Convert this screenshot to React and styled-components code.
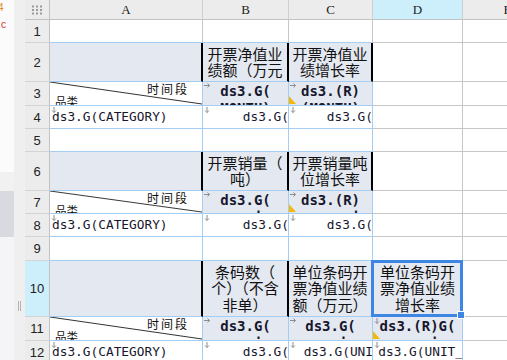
import React from 'react';
import styled, { createGlobalStyle } from 'styled-components';

const BLUE = '#a3cdf3';
const GRAY = '#c6c6c6';
const TITLE_BG = '#e4e8f0';
const HEAD_BG = '#ececec';
const ACTIVE_BG = '#cdeefb';
const SELECT = '#3d86e4';

const GlobalStyle = createGlobalStyle`
  html, body { margin: 0; padding: 0; background: #fff; }
  body { font-family: "Noto Sans CJK SC", "Liberation Sans", sans-serif; }
`;

const Page = styled.div`
  display: flex;
  width: 507px;
  height: 360px;
  overflow: hidden;
`;

const Side = styled.div`
  flex: none;
  width: 25px;
  display: flex;
`;

const Strip = styled.div`
  width: 14px;
  display: flex;
  flex-direction: column;
`;

const StripPart = styled.div`
  flex: ${({ $h }) => ($h ? 'none' : 1)};
  height: ${({ $h }) => ($h ? `${$h}px` : 'auto')};
  background: ${({ $bg }) => $bg};
  overflow: hidden;
`;

const Peek = styled.div`
  margin: ${({ $top }) => $top}px 0 0 ${({ $left }) => $left}px;
  font: 10px/10px "Liberation Sans", sans-serif;
  color: ${({ $color }) => $color};
`;

const Gutter = styled.div`
  width: 11px;
  background: #efefef;
  display: flex;
  flex-direction: column;
  align-items: center;
  padding-top: 301px;
  box-sizing: border-box;
`;

const Splitter = styled.div`
  width: 1px;
  height: 10px;
  border-left: 1px solid #b4b4b4;
  border-right: 1px solid #b4b4b4;
`;

const Sheet = styled.div`
  flex: none;
  display: grid;
  grid-template-columns: 25px 153px 86px 84px 90px 90px;
  grid-template-rows: 20px 23px 39px 24px 23px 23px 39px 23px 23px 24px 56px 24px 23px;
`;

const Corner = styled.div`
  background: ${HEAD_BG};
  border-right: 1px solid #c2c2c2;
  border-bottom: 1px solid #c2c2c2;
  display: flex;
  align-items: center;
  justify-content: center;
`;

const ColHead = styled.div`
  background: ${({ $active }) => ($active ? ACTIVE_BG : HEAD_BG)};
  border-right: 1px solid #d0d0d0;
  border-bottom: 1px solid #c2c2c2;
  display: flex;
  align-items: center;
  justify-content: center;
  font: 13px "Liberation Serif", serif;
  color: #222;
`;

const RowHead = styled.div`
  background: ${({ $active }) => ($active ? ACTIVE_BG : HEAD_BG)};
  border-right: 1px solid #c2c2c2;
  border-bottom: 1px solid #d4d4d4;
  display: flex;
  align-items: center;
  justify-content: center;
  font: 13px "Liberation Sans", sans-serif;
  color: #222;
`;

const Cell = styled.div`
  position: relative;
  z-index: ${({ $raised }) => ($raised ? 2 : 'auto')};
  min-width: 0;
  overflow: ${({ $raised }) => ($raised ? 'visible' : 'hidden')};
  background: ${({ $bg }) => $bg || '#fff'};
  border-right: ${({ $rw }) => $rw || 1}px solid ${({ $rc }) => $rc || GRAY};
  border-bottom: 1px solid ${({ $line }) => $line || GRAY};
  display: flex;
  flex-direction: column;
  justify-content: center;
  align-items: ${({ $h }) => $h || 'center'};
`;

const HeadCell = styled(Cell)`
  justify-content: flex-start;
  padding-top: 1px;
`;

const DiagCell = styled(Cell)`
  justify-content: space-between;
  align-items: stretch;
  padding: 1px 13px 2px 5px;
`;

const Slash = styled.svg`
  position: absolute;
  inset: 0;
  width: 100%;
  height: 100%;
`;

const DiagLabel = styled.span`
  align-self: ${({ $end }) => ($end ? 'flex-end' : 'flex-start')};
  font-size: ${({ $size }) => $size}px;
  line-height: 12px;
  letter-spacing: ${({ $spread }) => $spread || 0}px;
  color: #111;
`;

const Title = styled.div`
  font-size: 15px;
  line-height: 16.5px;
  color: #111;
  text-align: center;
  white-space: nowrap;
`;

const Formula = styled.div`
  font-family: "DejaVu Sans Mono", "Liberation Mono", monospace;
  font-size: ${({ $bold }) => ($bold ? '14px' : '12.8px')};
  font-weight: ${({ $bold }) => ($bold ? 700 : 400)};
  line-height: ${({ $bold }) => ($bold ? '17px' : '16px')};
  color: #17172e;
  white-space: pre;
  text-align: center;
  margin: ${({ $inset }) => $inset || '0'};
`;

const Marker = styled.svg`
  position: absolute;
  left: 1px;
  top: 1px;
  width: 6px;
  height: 6px;
`;

const Flag = styled.span`
  position: absolute;
  left: 0;
  bottom: 1px;
  width: 7px;
  height: 8px;
  background: #f3b80a;
  clip-path: polygon(0 0, 0 100%, 100% 100%);
`;

const Selection = styled.div`
  position: absolute;
  inset: -1px -1px -1px -2px;
  border: 3px solid ${SELECT};
  pointer-events: none;
`;

const Handle = styled.span`
  position: absolute;
  right: -5px;
  bottom: -5px;
  width: 6px;
  height: 6px;
  background: ${SELECT};
  border: 1px solid #fff;
`;

const GridDots = () => (
  <svg width="12" height="10" viewBox="0 0 12 10">
    {[0, 1, 2].map((r) =>
      [0, 1, 2].map((c) => (
        <rect key={`${r}${c}`} x={c * 4 + 1} y={r * 3.5 + 0.5} width="2" height="2" fill="#9a9a9a" />
      ))
    )}
  </svg>
);

const Arrow = ({ down }) => (
  <Marker viewBox="0 0 6 6">
    {down ? (
      <path d="M3 0V5.5M1 3.5L3 5.5L5 3.5" stroke="#8c8c8c" strokeWidth="1" fill="none" />
    ) : (
      <path d="M0 2.5H5.5M3.5 0.5L5.5 2.5L3.5 4.5" stroke="#8c8c8c" strokeWidth="1" fill="none" />
    )}
  </Marker>
);

const blocks = [
  {
    start: 2,
    titles: [['开票净值业', '绩额（万元'], ['开票净值业', '绩增长率']],
    heads: [['ds3.G(', 'MONTH)'], ['ds3.(R)', '(MONTH)']],
    flags: [false, true],
    data: ['ds3.G(', 'ds3.G('],
  },
  {
    start: 6,
    titles: [['开票销量（', '吨）'], ['开票销量吨', '位增长率']],
    heads: [['ds3.G(', '    i '], ['ds3.(R)', '      i']],
    flags: [false, true],
    data: ['ds3.G(', 'ds3.G('],
  },
  {
    start: 10,
    titles: [
      ['条码数（', '个）（不含', '非单）'],
      ['单位条码开', '票净值业绩', '额（万元）'],
      ['单位条码开', '票净值业绩', '增长率'],
    ],
    heads: [['ds3.G(', '    i '], ['ds3.G(', '    i '], ['ds3.(R)G(', '      i  ']],
    flags: [false, false, true],
    data: ['ds3.G(', 'ds3.G(UNI', 'ds3.G(UNIT_'],
  },
];

const Plain = ({ line }) => <Cell $line={line} />;

const TitleLines = ({ lines }) => (
  <Title>
    {lines.map((l) => (
      <div key={l}>{l}</div>
    ))}
  </Title>
);

const renderBlock = (b) => {
  const wide = b.titles.length === 3;
  const cells = [];
  // title row
  cells.push(<RowHead key={`h${b.start}`} $active={wide}>{b.start}</RowHead>);
  cells.push(<Cell key={`a${b.start}`} $bg={TITLE_BG} $rw={2} $rc="#000" $line={BLUE} />);
  b.titles.forEach((t, i) => {
    const selected = i === 2;
    cells.push(
      <Cell
        key={`t${b.start}${i}`}
        $bg={TITLE_BG}
        $rw={selected ? 1 : 2}
        $rc={selected ? GRAY : '#000'}
        $line={BLUE}
        $raised={selected}
      >
        <TitleLines lines={t} />
        {selected && (
          <Selection>
            <Handle />
          </Selection>
        )}
      </Cell>
    );
  });
  if (!wide) cells.push(<Plain key={`d${b.start}`} />);
  cells.push(<Plain key={`e${b.start}`} />);

  // key row with diagonal header
  const k = b.start + 1;
  cells.push(<RowHead key={`h${k}`}>{k}</RowHead>);
  cells.push(
    <DiagCell key={`a${k}`} $rc={BLUE} $line={BLUE}>
      <Slash viewBox="0 0 152 23" preserveAspectRatio="none">
        <line x1="0" y1="0" x2="152" y2="22" stroke="#333" strokeWidth="1" />
      </Slash>
      <DiagLabel $end $size={12} $spread={2}>时间段</DiagLabel>
      <DiagLabel $size={11.5}>品类</DiagLabel>
    </DiagCell>
  );
  b.heads.forEach((h, i) => {
    cells.push(
      <HeadCell key={`k${k}${i}`} $bg={TITLE_BG} $rc={BLUE} $line={BLUE}>
        <Arrow down={i === 2} />
        <Formula $bold>{h[0]}</Formula>
        <Formula $bold>{h[1]}</Formula>
        {b.flags[i] && <Flag />}
      </HeadCell>
    );
  });
  if (!wide) cells.push(<Plain key={`d${k}`} />);
  cells.push(<Plain key={`e${k}`} />);

  // data row
  const d = b.start + 2;
  cells.push(<RowHead key={`h${d}`}>{d}</RowHead>);
  cells.push(
    <Cell key={`a${d}`} $h="flex-start" $rc={BLUE} $line={BLUE}>
      <Arrow down />
      <Formula $inset="0 0 0 2px">ds3.G(CATEGORY)</Formula>
    </Cell>
  );
  b.data.forEach((t, i) => {
    cells.push(
      <Cell key={`v${d}${i}`} $h="flex-end" $rc={BLUE} $line={BLUE}>
        <Arrow down />
        <Formula $inset="0 -1px 0 0">{t}</Formula>
      </Cell>
    );
  });
  if (!wide) cells.push(<Plain key={`d${d}`} />);
  cells.push(<Plain key={`e${d}`} />);

  // spacer row
  const s = b.start + 3;
  if (s < 13) {
    cells.push(<RowHead key={`h${s}`}>{s}</RowHead>);
    ['a', 'b', 'c'].forEach((c) =>
      cells.push(<Cell key={`${c}${s}`} $rc={BLUE} $line={BLUE} />)
    );
    cells.push(<Plain key={`d${s}`} />);
    cells.push(<Plain key={`e${s}`} />);
  }
  return cells;
};

const App = () => (
  <>
    <GlobalStyle />
    <Page>
      <Side>
        <Strip>
          <StripPart $h={172} $bg="#fbfbfc">
            <Peek $top={3} $left={-2} $color="#e08a1e">4</Peek>
            <Peek $top={7} $left={1} $color="#d0342c">c</Peek>
          </StripPart>
          <StripPart $h={19} $bg="#f1f1f2" />
          <StripPart $h={46} $bg="#d9dadf" />
          <StripPart $bg="#f5f5f7" />
        </Strip>
        <Gutter>
          <Splitter />
        </Gutter>
      </Side>
      <Sheet>
        <Corner>
          <GridDots />
        </Corner>
        {['A', 'B', 'C', 'D', 'E'].map((c) => (
          <ColHead key={c} $active={c === 'D'}>
            {c}
          </ColHead>
        ))}
        <RowHead>1</RowHead>
        <Cell $line={BLUE} />
        <Cell $line={BLUE} />
        <Cell $line={BLUE} />
        <Plain />
        <Plain />
        {blocks.map(renderBlock)}
      </Sheet>
    </Page>
  </>
);

export default App;
